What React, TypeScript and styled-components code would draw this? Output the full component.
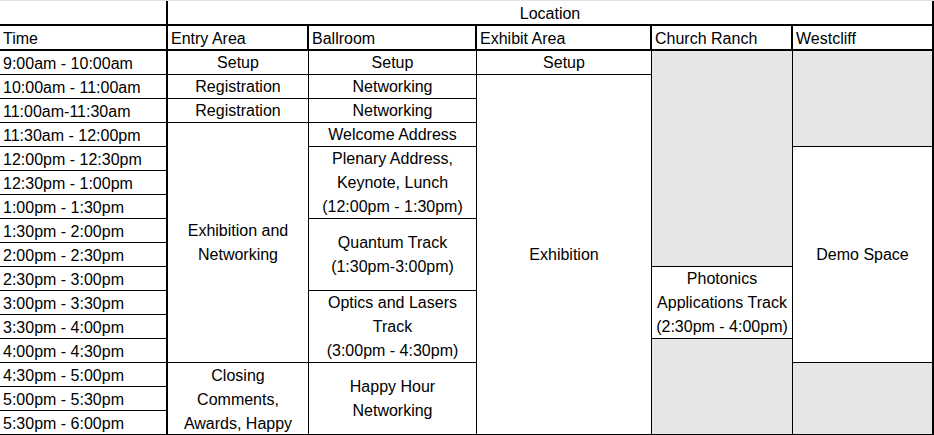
import styled, { createGlobalStyle } from "styled-components";

const GlobalStyle = createGlobalStyle`
  html, body {
    margin: 0;
    padding: 0;
    background: #ffffff;
  }
  body {
    font-family: "Liberation Sans", Arial, sans-serif;
    color: #000000;
  }
`;

type Slot = {
  col: number;
  row: number;
  span?: number;
  lines?: string[];
  shade?: boolean;
  top?: boolean;
};

const times = [
  "9:00am - 10:00am",
  "10:00am - 11:00am",
  "11:00am-11:30am",
  "11:30am - 12:00pm",
  "12:00pm - 12:30pm",
  "12:30pm - 1:00pm",
  "1:00pm - 1:30pm",
  "1:30pm - 2:00pm",
  "2:00pm - 2:30pm",
  "2:30pm - 3:00pm",
  "3:00pm - 3:30pm",
  "3:30pm - 4:00pm",
  "4:00pm - 4:30pm",
  "4:30pm - 5:00pm",
  "5:00pm - 5:30pm",
  "5:30pm - 6:00pm",
];

const rooms = ["Entry Area", "Ballroom", "Exhibit Area", "Church Ranch", "Westcliff"];

// col: 2..6 (1 is the time column), row: 0..15 data rows
const slots: Slot[] = [
  // Entry Area
  { col: 2, row: 0, lines: ["Setup"] },
  { col: 2, row: 1, lines: ["Registration"] },
  { col: 2, row: 2, lines: ["Registration"] },
  { col: 2, row: 3, span: 10, lines: ["Exhibition and", "Networking"] },
  { col: 2, row: 13, span: 3, top: true, lines: ["Closing", "Comments,", "Awards, Happy"] },
  // Ballroom
  { col: 3, row: 0, lines: ["Setup"] },
  { col: 3, row: 1, lines: ["Networking"] },
  { col: 3, row: 2, lines: ["Networking"] },
  { col: 3, row: 3, lines: ["Welcome Address"] },
  { col: 3, row: 4, span: 3, lines: ["Plenary Address,", "Keynote, Lunch", "(12:00pm - 1:30pm)"] },
  { col: 3, row: 7, span: 3, lines: ["Quantum Track", "(1:30pm-3:00pm)"] },
  { col: 3, row: 10, span: 3, lines: ["Optics and Lasers", "Track", "(3:00pm - 4:30pm)"] },
  { col: 3, row: 13, span: 3, lines: ["Happy Hour", "Networking"] },
  // Exhibit Area
  { col: 4, row: 0, lines: ["Setup"] },
  { col: 4, row: 1, span: 15, lines: ["Exhibition"] },
  // Church Ranch
  { col: 5, row: 0, span: 9, shade: true },
  { col: 5, row: 9, span: 3, lines: ["Photonics", "Applications Track", "(2:30pm - 4:00pm)"] },
  { col: 5, row: 12, span: 4, shade: true },
  // Westcliff
  { col: 6, row: 0, span: 4, shade: true },
  { col: 6, row: 4, span: 9, lines: ["Demo Space"] },
  { col: 6, row: 13, span: 3, shade: true },
];

const App = () => {
  return (
    <>
      <GlobalStyle />
      <Page>
        <TopEdge />
        <Sheet>
          <Corner />
          <LocationHead>Location</LocationHead>
          <ColHead $col={1}>Time</ColHead>
          {rooms.map((room, i) => (
            <ColHead key={room} $col={i + 2}>
              {room}
            </ColHead>
          ))}
          {times.map((t, i) => (
            <TimeCell key={t} $row={i}>
              {t}
            </TimeCell>
          ))}
          {slots.map((s) => (
            <SlotCell
              key={`${s.col}-${s.row}`}
              $col={s.col}
              $row={s.row}
              $span={s.span ?? 1}
              $shade={!!s.shade}
              $top={!!s.top}
            >
              {s.lines?.map((line) => (
                <Line key={line}>{line}</Line>
              ))}
            </SlotCell>
          ))}
        </Sheet>
      </Page>
    </>
  );
};

const Page = styled.div`
  width: 934px;
  height: 435px;
  overflow: hidden;
  background: #ffffff;
`;

const TopEdge = styled.div`
  height: 1px;
  background: #e1e1e1;
`;

const Sheet = styled.div`
  display: grid;
  grid-template-columns: 168px 141px 168px 175px 141px 141px;
  grid-template-rows: 25px 25px repeat(16, 24px);
  font-size: 16px;
  line-height: 24px;
  color: #000000;

  & > * {
    box-sizing: border-box;
  }
`;

const Corner = styled.div`
  grid-column: 1;
  grid-row: 1;
  border-right: 2px solid #000;
  border-bottom: 2px solid #000;
`;

const LocationHead = styled.div`
  grid-column: 2 / 7;
  grid-row: 1;
  border-right: 2px solid #000;
  border-bottom: 2px solid #000;
  text-align: center;
  padding-top: 1px;
  line-height: 23px;
`;

const ColHead = styled.div<{ $col: number }>`
  grid-column: ${(p) => p.$col};
  grid-row: 2;
  border-right: 2px solid #000;
  border-bottom: 2px solid #000;
  padding: 1px 0 0 3px;
  line-height: 23px;
  white-space: nowrap;
  overflow: hidden;
`;

const TimeCell = styled.div<{ $row: number }>`
  grid-column: 1;
  grid-row: ${(p) => p.$row + 3};
  border-right: 2px solid #000;
  border-bottom: 1px solid #000;
  padding: 1px 0 0 3px;
  line-height: 23px;
  white-space: nowrap;
`;

const SlotCell = styled.div<{
  $col: number;
  $row: number;
  $span: number;
  $shade: boolean;
  $top: boolean;
}>`
  grid-column: ${(p) => p.$col};
  grid-row: ${(p) => `${p.$row + 3} / span ${p.$span}`};
  border-right: ${(p) => (p.$col === 6 ? 2 : 1)}px solid #000;
  border-bottom: 1px solid #000;
  background: ${(p) => (p.$shade ? "#e7e6e6" : "#ffffff")};
  padding-top: 1px;
  display: flex;
  flex-direction: column;
  justify-content: ${(p) => (p.$top ? "flex-start" : "center")};
  align-items: center;
  text-align: center;
  overflow: hidden;
`;

const Line = styled.div`
  line-height: 24px;
  white-space: nowrap;
`;

export default App;
